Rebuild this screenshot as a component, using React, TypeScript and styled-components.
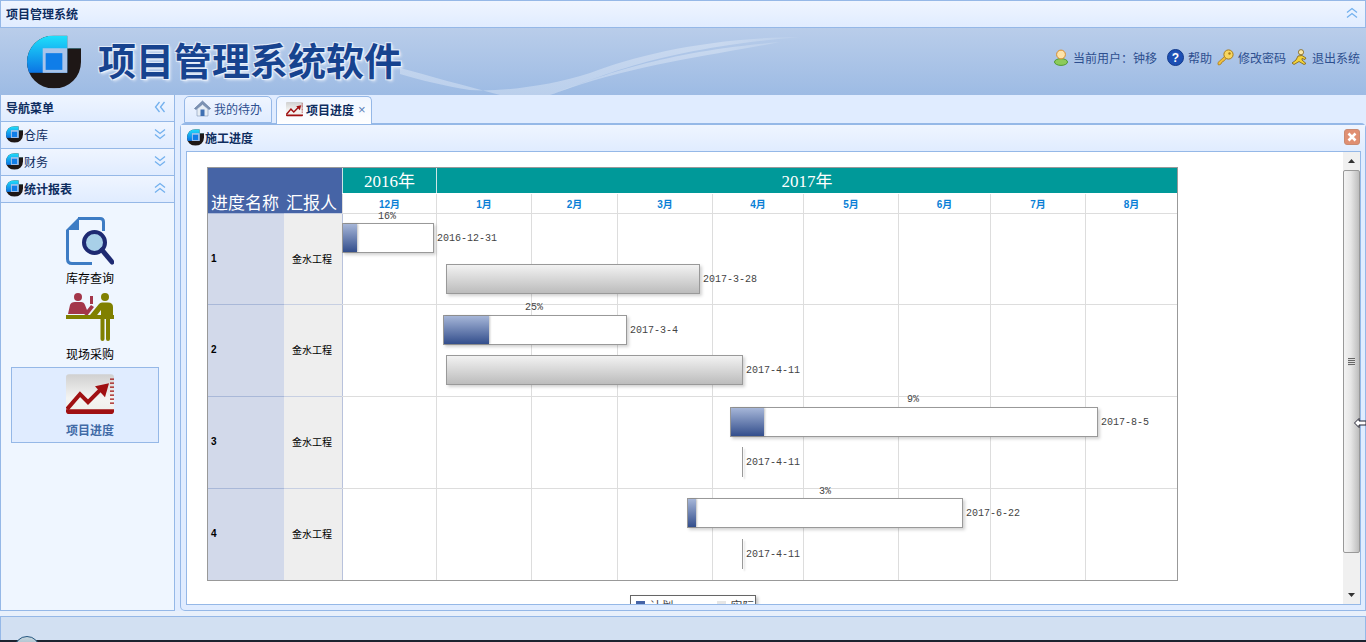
import { useId } from 'react'
import styled, { createGlobalStyle } from 'styled-components'

const GlobalStyle = createGlobalStyle`
	html, body {
		margin: 0;
		padding: 0;
		overflow: hidden;
		background: #eef3fb;
	}
	body {
		font-family: "Liberation Sans", "Noto Sans CJK SC", sans-serif;
		font-size: 12px;
	}
`

const Page = styled.div`
	position: relative;
	width: 1366px;
	height: 642px;
	display: flex;
	flex-direction: column;
	overflow: hidden;
`

const TopBar = styled.div`
	box-sizing: border-box;
	height: 28px;
	flex: none;
	display: flex;
	align-items: center;
	justify-content: space-between;
	padding: 0 7px 2px 5px;
	border: 1px solid #95b8e7;
	background: linear-gradient(to bottom, #eff5ff, #e0ecff);
	color: #0e2d5f;
	font-weight: 700;
`

const Banner = styled.div`
	position: relative;
	height: 67px;
	flex: none;
	display: flex;
	align-items: flex-start;
	justify-content: space-between;
	overflow: hidden;
	background: linear-gradient(to bottom, #b9cdea, #9dbbe4);
`

const Wave = styled.svg`
	position: absolute;
	left: 0;
	top: 0;
`

const Brand = styled.div`
	position: relative;
	display: flex;
	align-items: center;
	gap: 17px;
	padding: 7px 0 0 27px;
`

const BrandTitle = styled.div`
	font-size: 38px;
	line-height: 40px;
	font-weight: 700;
	color: #17438f;
	white-space: nowrap;
	text-shadow: 1px 1px 0 #e8f0fb, -1px -1px 0 #dfe9f8, 1px -1px 0 #dfe9f8, -1px 1px 0 #dfe9f8, 2px 2px 3px #ffffffaa;
`

const UserMenu = styled.div`
	position: relative;
	display: flex;
	align-items: center;
	padding: 21px 6px 0 0;
`

const MenuLink = styled.div<{ $gap: number }>`
	display: flex;
	align-items: center;
	gap: 4px;
	margin-left: ${p => p.$gap}px;
	color: #2d4f8f;
	font-size: 12px;
	white-space: nowrap;
`

const Main = styled.div`
	height: 516px;
	flex: none;
	display: flex;
	gap: 5px;
	background: #e0ecff;
`

const Sidebar = styled.div`
	box-sizing: border-box;
	width: 175px;
	flex: none;
	display: flex;
	flex-direction: column;
	border: 1px solid #95b8e7;
	border-top: none;
	background: #eff6ff;
`

const SideHead = styled.div`
	box-sizing: border-box;
	height: 27px;
	flex: none;
	display: flex;
	align-items: center;
	justify-content: space-between;
	padding: 0 8px 2px 5px;
	border-bottom: 1px solid #95b8e7;
	background: linear-gradient(to bottom, #eff5ff, #e0ecff);
	color: #0e2d5f;
	font-weight: 700;
`

const SideTitle = styled.div<{ $bold?: boolean }>`
	display: flex;
	align-items: center;
	gap: 1px;
	font-weight: ${p => (p.$bold ? 700 : 400)};
`

const SideList = styled.div`
	display: flex;
	flex-direction: column;
	padding: 12px 15px 0 10px;
`

const SideItem = styled.div<{ $active?: boolean }>`
	box-sizing: border-box;
	width: 148px;
	height: 76px;
	display: flex;
	flex-direction: column;
	align-items: center;
	justify-content: flex-end;
	gap: ${p => (p.$active ? 7 : 4)}px;
	padding: 0 0 4px 10px;
	border: 1px solid ${p => (p.$active ? '#95b8e7' : 'transparent')};
	background: ${p => (p.$active ? '#e0ecff' : 'transparent')};
	color: ${p => (p.$active ? '#416aa6' : '#000')};
	font-weight: ${p => (p.$active ? 700 : 400)};
`

const Content = styled.div`
	flex: 1;
	min-width: 0;
	display: flex;
	flex-direction: column;
`

const TabBar = styled.div`
	box-sizing: border-box;
	height: 28px;
	flex: none;
	display: flex;
	align-items: flex-end;
	gap: 4px;
	padding-left: 4px;
`

const Tab = styled.div<{ $active?: boolean }>`
	box-sizing: border-box;
	height: ${p => (p.$active ? 28 : 27)}px;
	display: flex;
	align-items: center;
	gap: 3px;
	padding: 0 ${p => (p.$active ? 5 : 9)}px 2px 9px;
	border: 1px solid #95b8e7;
	border-bottom: ${p => (p.$active ? 'none' : '1px solid #95b8e7')};
	border-radius: 5px 5px 0 0;
	background: ${p => (p.$active ? 'linear-gradient(to bottom, #eff5ff, #ffffff)' : 'linear-gradient(to bottom, #eff5ff, #e0ecff)')};
	color: ${p => (p.$active ? '#0e2d5f' : '#2d4f8f')};
	font-weight: ${p => (p.$active ? 700 : 400)};
	margin-bottom: ${p => (p.$active ? -1 : 0)}px;
	position: relative;
`

const TabClose = styled.span`
	color: #5b7fb8;
	font-size: 13px;
	line-height: 12px;
	font-weight: 400;
	margin-left: 1px;
`

const Panel = styled.div`
	box-sizing: border-box;
	flex: 1;
	display: flex;
	flex-direction: column;
	min-height: 0;
	border: 1px solid #95b8e7;
	border-top-width: 2px;
	border-radius: 5px 5px 0 5px;
	background: #e0ecff;
`

const PanelHead = styled.div`
	box-sizing: border-box;
	height: 26px;
	flex: none;
	display: flex;
	align-items: center;
	justify-content: space-between;
	padding: 0 5px 2px 6px;
	background: linear-gradient(to bottom, #eff5ff, #e0ecff);
	color: #0e2d5f;
	font-weight: 700;
`

const CloseButton = styled.div`
	box-sizing: border-box;
	width: 16px;
	height: 16px;
	display: flex;
	align-items: center;
	justify-content: center;
	border: 1px solid #c98a72;
	border-radius: 3px;
	background: #e08f72;
`

const PanelBody = styled.div`
	box-sizing: border-box;
	flex: 1;
	min-height: 0;
	display: flex;
	margin: 0 4px 5px 5px;
	border: 1px solid #95b8e7;
	background: #fff;
	overflow: hidden;
`

const ChartScroll = styled.div`
	flex: 1;
	min-width: 0;
	padding: 15px 0 0 20px;
	overflow: hidden;
`

const ChartWrap = styled.div`
	width: 971px;
	display: flex;
	flex-direction: column;
`

const Chart = styled.div`
	box-sizing: border-box;
	width: 971px;
	height: 414px;
	flex: none;
	display: flex;
	flex-direction: column;
	border: 1px solid #999;
`

const ChartHead = styled.div`
	height: 45px;
	flex: none;
	display: flex;
`

const serif = `"Liberation Serif", "Noto Sans CJK SC", serif`

const NameHead = styled.div`
	width: 134px;
	flex: none;
	display: flex;
	align-items: flex-end;
	gap: 7px;
	padding-left: 3px;
	box-sizing: border-box;
	background: #4664a6;
	color: #fff;
	font-family: ${serif};
	font-size: 17px;
	line-height: 18px;
	white-space: nowrap;
`

const Timeline = styled.div`
	flex: 1;
	display: flex;
	flex-direction: column;
`

const YearRow = styled.div`
	height: 25px;
	flex: none;
	display: flex;
	background: #009999;
`

const YearCell = styled.div<{ $w: number }>`
	box-sizing: border-box;
	width: ${p => p.$w}px;
	display: flex;
	align-items: center;
	justify-content: center;
	padding-bottom: 2px;
	border-left: 1px solid #cfe5e5;
	color: #fff;
	font-family: ${serif};
	font-size: 17px;
`

const MonthRow = styled.div`
	flex: 1;
	display: flex;
	border-top: 1px solid #fff;
`

const MonthCell = styled.div<{ $w: number }>`
	box-sizing: border-box;
	width: ${p => p.$w}px;
	display: flex;
	align-items: center;
	justify-content: center;
	padding-bottom: 1px;
	border-left: 1px solid #ddd;
	color: #0a7fd6;
	font-size: 10px;
	font-weight: 700;
`

const Row = styled.div<{ $h: number }>`
	height: ${p => p.$h}px;
	flex: none;
	display: flex;
	border-top: 1px solid #ddd;
	box-sizing: border-box;
`

const NameCell = styled.div`
	box-sizing: border-box;
	width: 76px;
	flex: none;
	display: flex;
	align-items: center;
	padding: 0 0 2px 3px;
	margin-top: -1px;
	border-top: 1px solid #a9b8d8;
	background: #d2d9ea;
	font-size: 10px;
	font-weight: 700;
	color: #000;
`

const ReporterCell = styled.div`
	box-sizing: border-box;
	width: 58px;
	flex: none;
	display: flex;
	align-items: center;
	justify-content: center;
	padding: 0 2px 2px 0;
	margin-top: -1px;
	border-top: 1px solid #c7cfe2;
	background: #eee;
	font-size: 10px;
	color: #000;
`

const Lane = styled.div`
	position: relative;
	flex: 1;
	display: flex;
`

const GridCell = styled.div<{ $w: number; $first: boolean }>`
	box-sizing: border-box;
	width: ${p => p.$w}px;
	border-left: 1px solid ${p => (p.$first ? '#b8c2dc' : '#ddd')};
`

const Bar = styled.div<{ $x: number; $y: number; $w: number; $actual?: boolean }>`
	position: absolute;
	box-sizing: border-box;
	left: ${p => p.$x}px;
	top: ${p => p.$y}px;
	width: ${p => p.$w}px;
	height: 30px;
	border: 1px solid #999;
	background: ${p => (p.$actual ? 'linear-gradient(to bottom, #f2f2f2, #bcbcbc)' : '#fff')};
	box-shadow: 2px 2px 3px rgba(0, 0, 0, 0.18);
`

const BarFill = styled.div<{ $w: number }>`
	width: ${p => p.$w}px;
	height: 100%;
	background: linear-gradient(to bottom, #a6b6d8, #334e8c);
	box-shadow: 1px 0 2px rgba(0, 0, 0, 0.25);
`

const Marker = styled.div<{ $x: number; $y: number }>`
	position: absolute;
	left: ${p => p.$x}px;
	top: ${p => p.$y}px;
	width: 1px;
	height: 30px;
	background: #999;
	box-shadow: 2px 2px 2px rgba(0, 0, 0, 0.15);
`

const BarText = styled.div<{ $x: number; $y: number; $center?: boolean }>`
	position: absolute;
	left: ${p => p.$x}px;
	top: ${p => p.$y}px;
	${p => (p.$center ? 'transform: translateX(-50%);' : '')}
	font-family: "Liberation Mono", monospace;
	font-size: 10px;
	line-height: 12px;
	color: #444;
	white-space: nowrap;
`

const Legend = styled.div`
	box-sizing: border-box;
	width: 126px;
	height: 30px;
	flex: none;
	margin: 14px auto 0;
	display: flex;
	align-items: flex-start;
	gap: 5px;
	padding: 4px 0 0 5px;
	border: 1px solid #666;
	box-shadow: 2px 2px 3px rgba(0, 0, 0, 0.25);
	color: #444;
	font-size: 12px;
	line-height: 14px;
`

const LegendSwatch = styled.span<{ $color: string; $gap?: number }>`
	width: 9px;
	height: 9px;
	flex: none;
	margin-top: 1px;
	margin-left: ${p => p.$gap || 0}px;
	background: ${p => p.$color};
`

const ScrollTrack = styled.div`
	width: 17px;
	flex: none;
	display: flex;
	flex-direction: column;
	background: #f0f0f0;
`

const ScrollButton = styled.div`
	height: 18px;
	flex: none;
	display: flex;
	align-items: center;
	justify-content: center;
`

const ScrollThumb = styled.div`
	box-sizing: border-box;
	height: 383px;
	flex: none;
	display: flex;
	align-items: center;
	justify-content: center;
	border: 1px solid #999;
	border-radius: 2px;
	background: linear-gradient(to right, #f3f3f3, #e6e6e6 45%, #bdbdbd);
`

const ScrollGrip = styled.div`
	width: 7px;
	height: 8px;
	background: repeating-linear-gradient(to bottom, #666 0 1px, #ddd 1px 2px);
`

const ScrollRest = styled.div`
	flex: 1;
`

const Cursor = styled.svg`
	position: absolute;
	left: 1354px;
	top: 417px;
`

const FooterGap = styled.div`
	height: 5px;
	flex: none;
	background: #e8f0fb;
`

const Footer = styled.div`
	box-sizing: border-box;
	height: 24px;
	flex: none;
	border: 1px solid #95b8e7;
	border-bottom: none;
	background: #d2e0f2;
`

const Taskbar = styled.div`
	flex: 1;
	background: #1c2430;
`

const StartOrb = styled.div`
	position: absolute;
	left: 14px;
	top: 636px;
	width: 26px;
	height: 26px;
	box-sizing: border-box;
	border: 1px solid #25577f;
	border-radius: 50%;
	background: linear-gradient(to bottom, #c6d6df, #6d8fa5);
`

const LogoSvg = styled.svg<{ $size: number }>`
	width: ${p => p.$size}px;
	height: ${p => p.$size}px;
	flex: none;
	display: block;
`

const Logo = ({ size }: { size: number }) => {
	const id = useId()
	return (
		<LogoSvg $size={size} viewBox="0 0 55 54">
			<defs>
				<linearGradient id={id} x1="0" y1="0" x2="0" y2="1">
					<stop offset="0" stopColor="#1fe0fb" />
					<stop offset="1" stopColor="#0b74e4" />
				</linearGradient>
				<clipPath id={id + 'c'}>
					<path d="M0 27A27 27 0 0 1 27 0H41V13H55V27A27 27 0 0 1 28 54H27A27 27 0 0 1 0 27Z" />
				</clipPath>
			</defs>
			<g clipPath={`url(#${id}c)`}>
				<rect width="55" height="54" fill="#1e1716" />
				<rect width="41" height="38" fill={`url(#${id})`} />
				<rect x="41" width="14" height="13" fill="#1fe6fb" />
				<rect x="41" width="1.5" height="13" fill="#b5ddf2" />
			</g>
			<rect x="16" y="13" width="25" height="25" fill="#a9c4ea" />
			<rect x="19" y="18" width="17" height="17" fill="#0f7de8" />
		</LogoSvg>
	)
}

const Chevrons = ({ up, left }: { up?: boolean; left?: boolean }) => (
	<svg width="12" height="12" viewBox="0 0 12 12" fill="none" stroke="#72b0ee" strokeWidth="1.3">
		<g transform={left ? 'rotate(90 6 6)' : up ? 'rotate(180 6 6)' : undefined}>
			<path d="M1 1.500L6 5.500L11 1.500" />
			<path d="M1 6.500L6 10.500L11 6.500" />
		</g>
	</svg>
)

const UserIcon = () => (
	<svg width="16" height="17" viewBox="0 0 16 17">
		<ellipse cx="8" cy="13" rx="6.500" ry="3.400" fill="#8ccb5a" stroke="#4f9a33" />
		<circle cx="8" cy="5.500" r="4.400" fill="#fde3a8" stroke="#d98d2c" />
	</svg>
)

const HelpIcon = () => (
	<svg width="17" height="17" viewBox="0 0 17 17">
		<circle cx="8.500" cy="8.500" r="8" fill="#1c4fb4" stroke="#123a8c" />
		<path d="M4 5A6 4 0 0 1 13 5A8 5 0 0 0 4 5Z" fill="#7ea5ea" />
		<text x="8.500" y="13" textAnchor="middle" fontSize="12" fontWeight="700" fill="#fff" fontFamily="Liberation Sans">?</text>
	</svg>
)

const KeyIcon = () => (
	<svg width="17" height="17" viewBox="0 0 17 17">
		<path d="M1 13.500L8 7L10 9L8 10.500L7 12L5 13L4 15L2 16L1 15.500Z" fill="#f0c040" stroke="#a87a18" strokeWidth="0.8" />
		<circle cx="11.500" cy="5.500" r="4.600" fill="#f7d65f" stroke="#a87a18" />
		<circle cx="12.500" cy="4.500" r="1.200" fill="#a87a18" />
	</svg>
)

const RunnerIcon = () => (
	<svg width="17" height="17" viewBox="0 0 17 17">
		<circle cx="10" cy="3.200" r="2.600" fill="#fbe9a8" stroke="#7a5d12" strokeWidth="0.8" />
		<path d="M1 14L5 11L7 7L11 6.500L15 9L14 10.500L11 9.500L11 11L15 14.500L13 15.500L8 12.500L3 15.500Z" fill="#f3d23a" stroke="#7a5d12" strokeWidth="0.8" />
	</svg>
)

const HomeIcon = () => (
	<svg width="17" height="17" viewBox="0 0 17 17">
		<path d="M0.500 8.500L8.500 1L16.500 8.500L15 9.500L8.500 4L2 9.500Z" fill="#7f95b5" stroke="#4f6a92" strokeWidth="0.6" />
		<path d="M3 9L8.500 4.500L14 9V16H3Z" fill="#e6edf4" stroke="#7f95b5" strokeWidth="0.6" />
		<rect x="6.500" y="9.500" width="4" height="6.500" fill="#3e6fb2" />
	</svg>
)

const TrendIcon = ({ size }: { size: number }) => (
	<svg width={size} height={size * 0.84} viewBox="0 0 48 40">
		<defs>
			<linearGradient id={'trend' + size} x1="0" y1="0" x2="0" y2="1">
				<stop offset="0" stopColor="#d0d0d0" />
				<stop offset="0.6" stopColor="#f4f4f2" />
				<stop offset="1" stopColor="#eeeeea" />
			</linearGradient>
		</defs>
		<rect width="48" height="40" rx="3" fill={`url(#trend${size})`} />
		<path d="M1 35L14 20L22 28L36 14" fill="none" stroke="#a01012" strokeWidth="4" />
		<path d="M29 12L43 9L39 23Z" fill="#a01012" />
		<path d="M0 35H48V37Q48 40 45 40H3Q0 40 0 37Z" fill="#a01012" />
		<path d="M44 5H48M44 9H48M44 13H48M44 17H48M44 21H48M44 25H48M44 29H48" stroke="#a01012" strokeWidth="1.400" />
	</svg>
)

const SearchDocIcon = () => (
	<svg width="48" height="48" viewBox="0 0 48 48" fill="none">
		<path d="M12 1.500H34Q37.500 1.500 37.500 5V14M1.500 13V42Q1.500 46.500 6 46.500H26" stroke="#3d7cc4" strokeWidth="3" />
		<path d="M0 13L13 0V13Z" fill="#3d7cc4" />
		<circle cx="28.500" cy="25.500" r="10.500" fill="#a8d0e8" stroke="#1e2a72" strokeWidth="4" />
		<path d="M36 33L46 45" stroke="#1e2a72" strokeWidth="5" strokeLinecap="round" />
	</svg>
)

const PurchaseIcon = () => (
	<svg width="48" height="48" viewBox="0 0 48 48">
		<circle cx="12" cy="4" r="4" fill="#a3364a" />
		<path d="M2 21L4 12Q5 9 9 9H15Q18 9 19 12L21 17L25 12L28 14L21 23L18 21H2Z" fill="#a3364a" />
		<rect x="24" y="3" width="3" height="8" fill="#a3364a" />
		<circle cx="39" cy="4" r="4" fill="#808000" />
		<path d="M24 22L33 11Q34 9.500 36 9.500H42Q47 9.500 47 14V24H35V17L28 26Z" fill="#808000" />
		<rect y="22" width="48" height="4" fill="#808000" />
		<rect x="34.500" y="22" width="4" height="26" rx="2" fill="#808000" />
		<rect x="40" y="22" width="4" height="26" rx="2" fill="#808000" />
	</svg>
)

const Arrow = ({ down }: { down?: boolean }) => (
	<svg width="7" height="4" viewBox="0 0 7 4">
		<path d={down ? 'M0 0H7L3.500 4Z' : 'M0 4H7L3.500 0Z'} fill="#333" />
	</svg>
)

const MONTHS: [string, number][] = [
	['12月', 94], ['1月', 95], ['2月', 86], ['3月', 95], ['4月', 91],
	['5月', 95], ['6月', 92], ['7月', 95], ['8月', 92]
]

type Span = { x: number, y: number, w: number, fill: number, pct: string, pctX: number, date: string, dateY: number }
type Done = { x: number, y: number, w: number, date: string, dateX: number, dateY: number }

const ROWS: { id: string, h: number, plan: Span, done: Done }[] = [
	{
		id: '1', h: 91,
		plan: { x: 0, y: 9, w: 92, fill: 14, pct: '16%', pctX: 45, date: '2016-12-31', dateY: 19 },
		done: { x: 104, y: 50, w: 254, date: '2017-3-28', dateX: 361, dateY: 60 }
	},
	{
		id: '2', h: 92,
		plan: { x: 101, y: 10, w: 184, fill: 45, pct: '25%', pctX: 192, date: '2017-3-4', dateY: 20 },
		done: { x: 104, y: 50, w: 297, date: '2017-4-11', dateX: 404, dateY: 60 }
	},
	{
		id: '3', h: 92,
		plan: { x: 388, y: 10, w: 368, fill: 33, pct: '9%', pctX: 571, date: '2017-8-5', dateY: 20 },
		done: { x: 400, y: 50, w: 0, date: '2017-4-11', dateX: 404, dateY: 60 }
	},
	{
		id: '4', h: 92,
		plan: { x: 345, y: 9, w: 276, fill: 8, pct: '3%', pctX: 483, date: '2017-6-22', dateY: 19 },
		done: { x: 400, y: 50, w: 0, date: '2017-4-11', dateX: 404, dateY: 60 }
	}
]

const NAV = [
	{ label: '库存查询', icon: <SearchDocIcon /> },
	{ label: '现场采购', icon: <PurchaseIcon /> },
	{ label: '项目进度', icon: <TrendIcon size={48} />, active: true }
]

const App = () => (
	<Page>
		<GlobalStyle />
		<TopBar>
			<span>项目管理系统</span>
			<Chevrons up />
		</TopBar>
		<Banner>
			<Wave width="1366" height="67" viewBox="0 0 1366 67">
				<defs>
					<linearGradient id="waveFade" x1="380" y1="0" x2="830" y2="0" gradientUnits="userSpaceOnUse">
						<stop offset="0" stopColor="#fff" stopOpacity="0.3" />
						<stop offset="0.75" stopColor="#fff" stopOpacity="0.3" />
						<stop offset="1" stopColor="#fff" stopOpacity="0" />
					</linearGradient>
				</defs>
				<path d="M400 40C430 48 465 58 500 67H550C600 50 650 22 800 9C710 10 640 26 590 45C550 58 500 64 470 62C445 58 420 52 400 46Z" fill="url(#waveFade)" />
				<path d="M550 67C600 48 660 24 780 14C720 26 640 36 570 60Z" fill="url(#waveFade)" />
			</Wave>
			<Brand>
				<Logo size={54} />
				<BrandTitle>项目管理系统软件</BrandTitle>
			</Brand>
			<UserMenu>
				<MenuLink $gap={0}><UserIcon />当前用户：钟移</MenuLink>
				<MenuLink $gap={10}><HelpIcon />帮助</MenuLink>
				<MenuLink $gap={5}><KeyIcon />修改密码</MenuLink>
				<MenuLink $gap={5}><RunnerIcon />退出系统</MenuLink>
			</UserMenu>
		</Banner>
		<Main>
			<Sidebar>
				<SideHead>
					<span>导航菜单</span>
					<Chevrons left />
				</SideHead>
				<SideHead>
					<SideTitle><Logo size={17} />仓库</SideTitle>
					<Chevrons />
				</SideHead>
				<SideHead>
					<SideTitle><Logo size={17} />财务</SideTitle>
					<Chevrons />
				</SideHead>
				<SideHead>
					<SideTitle $bold><Logo size={17} />统计报表</SideTitle>
					<Chevrons up />
				</SideHead>
				<SideList>
					{NAV.map(item => (
						<SideItem key={item.label} $active={item.active}>
							{item.icon}
							<span>{item.label}</span>
						</SideItem>
					))}
				</SideList>
			</Sidebar>
			<Content>
				<TabBar>
					<Tab><HomeIcon />我的待办</Tab>
					<Tab $active><TrendIcon size={17} />项目进度<TabClose>×</TabClose></Tab>
				</TabBar>
				<Panel>
					<PanelHead>
						<SideTitle $bold><Logo size={17} />施工进度</SideTitle>
						<CloseButton>
							<svg width="10" height="10" viewBox="0 0 10 10">
								<path d="M1.500 1.500L8.500 8.500M8.500 1.500L1.500 8.500" stroke="#fff" strokeWidth="2.600" />
							</svg>
						</CloseButton>
					</PanelHead>
					<PanelBody>
						<ChartScroll>
							<ChartWrap>
								<Chart>
									<ChartHead>
										<NameHead>
											<span>进度名称</span>
											<span>汇报人</span>
										</NameHead>
										<Timeline>
											<YearRow>
												<YearCell $w={94}>2016年</YearCell>
												<YearCell $w={741}>2017年</YearCell>
											</YearRow>
											<MonthRow>
												{MONTHS.map(([label, w]) => (
													<MonthCell key={label} $w={w}>{label}</MonthCell>
												))}
											</MonthRow>
										</Timeline>
									</ChartHead>
									{ROWS.map(row => (
										<Row key={row.id} $h={row.h}>
											<NameCell>{row.id}</NameCell>
											<ReporterCell>金水工程</ReporterCell>
											<Lane>
												{MONTHS.map(([label, w], i) => (
													<GridCell key={label} $w={w} $first={i === 0} />
												))}
												<BarText $x={row.plan.pctX} $y={-3} $center>{row.plan.pct}</BarText>
												<Bar $x={row.plan.x} $y={row.plan.y} $w={row.plan.w}>
													<BarFill $w={row.plan.fill} />
												</Bar>
												<BarText $x={row.plan.x + row.plan.w + 3} $y={row.plan.dateY}>{row.plan.date}</BarText>
												{row.done.w > 0
													? <Bar $actual $x={row.done.x} $y={row.done.y} $w={row.done.w} />
													: <Marker $x={row.done.x} $y={row.done.y} />}
												<BarText $x={row.done.dateX} $y={row.done.dateY}>{row.done.date}</BarText>
											</Lane>
										</Row>
									))}
								</Chart>
								<Legend>
									<LegendSwatch $color="#4664a6" />
									<span>计划</span>
									<LegendSwatch $color="#e6e6e6" $gap={38} />
									<span>实际</span>
								</Legend>
							</ChartWrap>
						</ChartScroll>
						<ScrollTrack>
							<ScrollButton><Arrow /></ScrollButton>
							<ScrollThumb><ScrollGrip /></ScrollThumb>
							<ScrollRest />
							<ScrollButton><Arrow down /></ScrollButton>
						</ScrollTrack>
					</PanelBody>
				</Panel>
			</Content>
		</Main>
		<FooterGap />
		<Footer />
		<Taskbar />
		<StartOrb />
		<Cursor width="12" height="12" viewBox="0 0 12 12">
			<path d="M0.500 6L5 1.500V4H12V8H5V10.500Z" fill="#fff" stroke="#223" strokeWidth="1" />
		</Cursor>
	</Page>
)

export default App
